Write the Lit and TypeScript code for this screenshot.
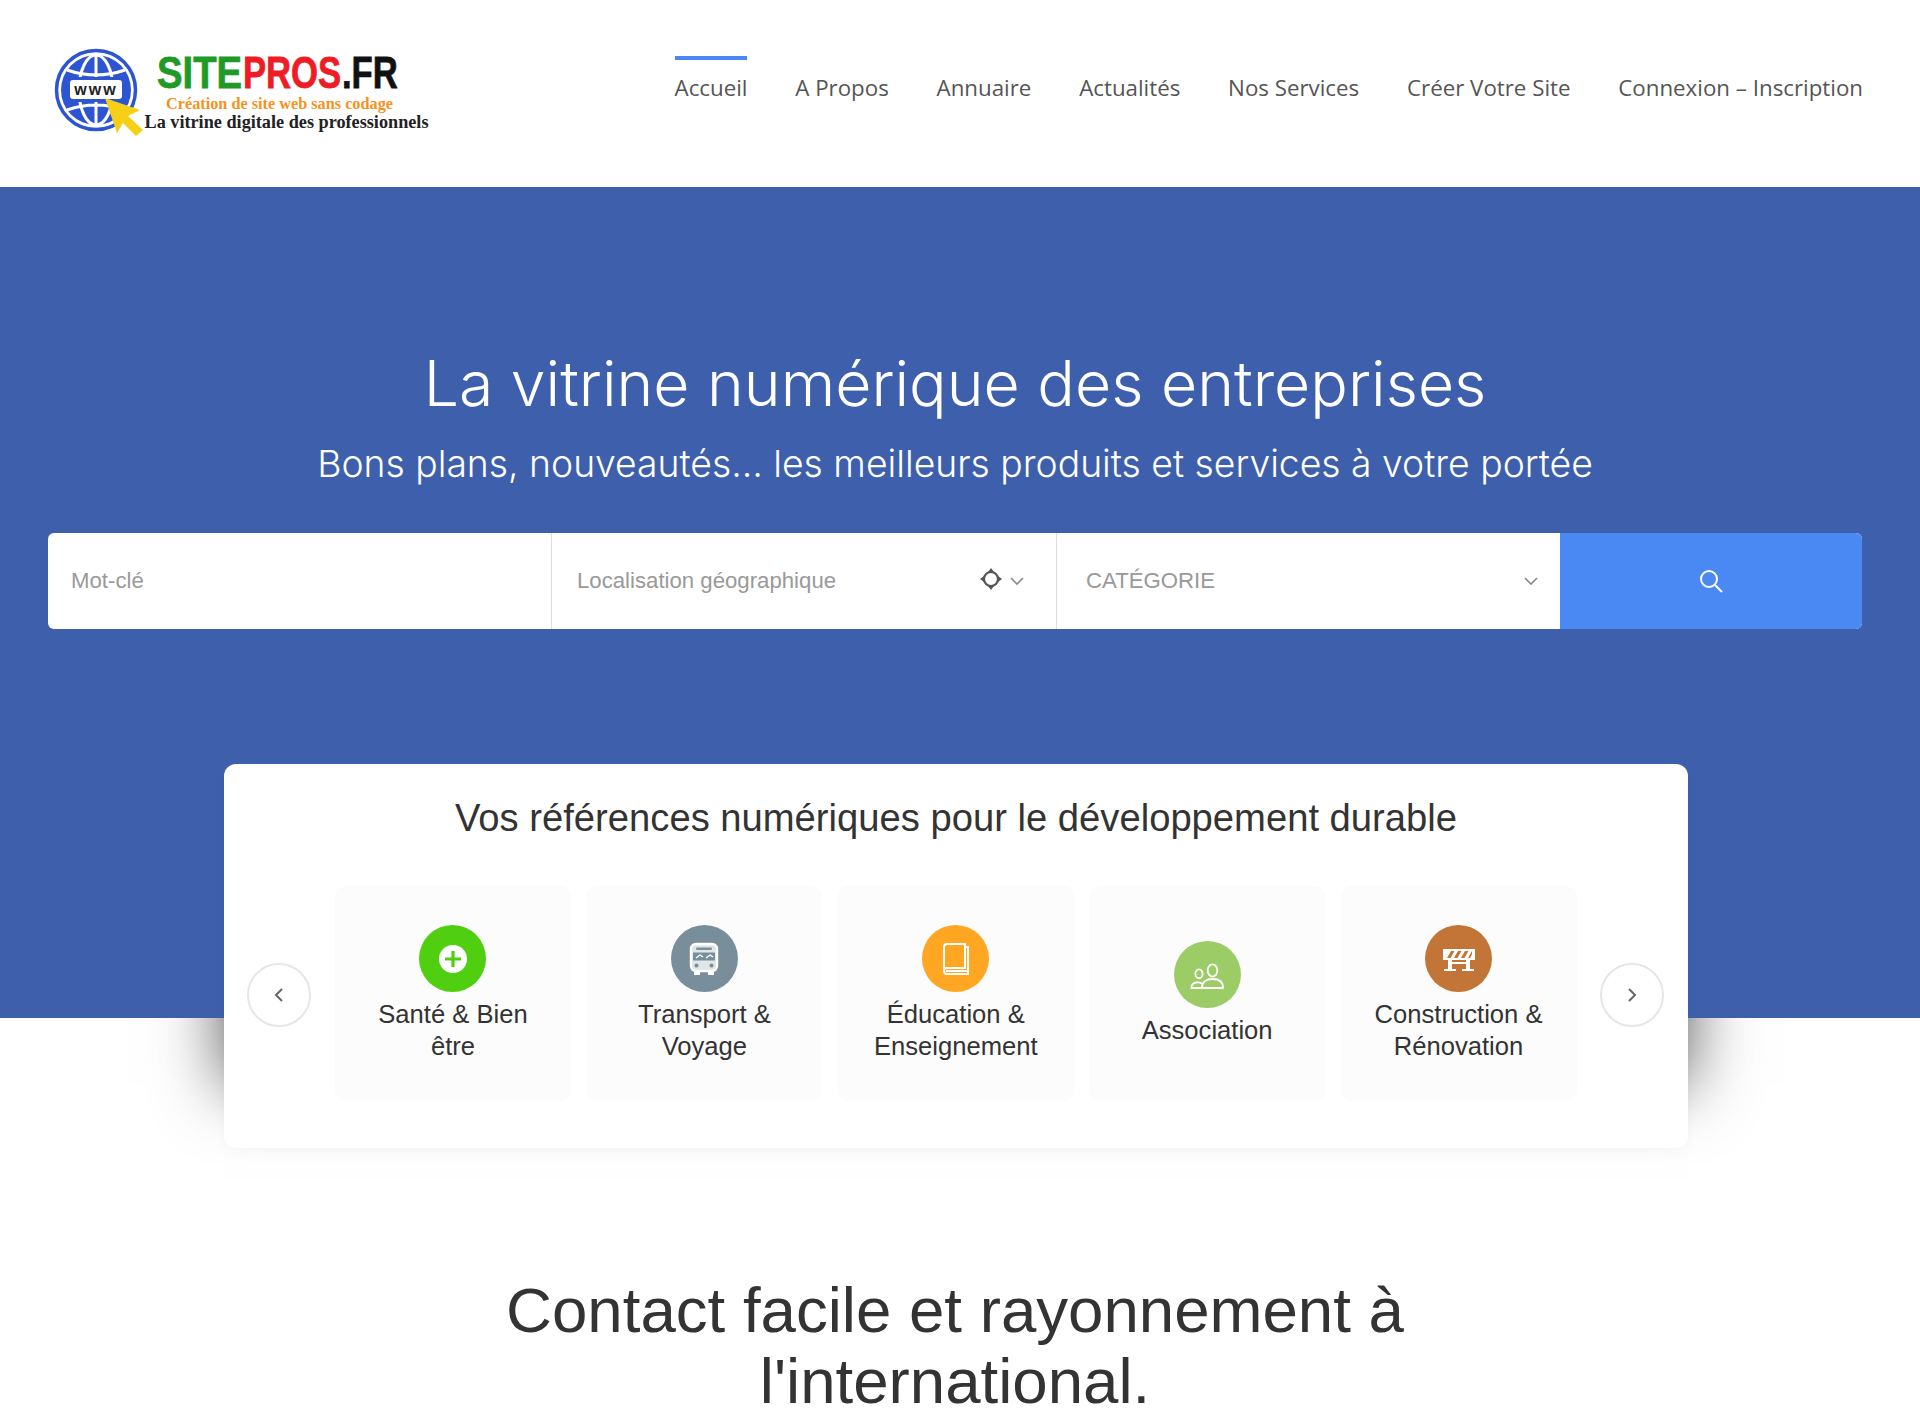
import { LitElement, html, css, svg } from "lit";
import { customElement } from "lit/decorators.js";

const NAV = ["Accueil", "A Propos", "Annuaire", "Actualités", "Nos Services", "Créer Votre Site", "Connexion – Inscription"];

const ICONS = {
  plus: svg`<circle cx="20" cy="20" r="14" fill="#fff"/><path d="M20 12v16M12 20h16" stroke="#4fcf10" stroke-width="3.200" fill="none"/>`,
  bus: svg`<rect x="7" y="5" width="26" height="27" rx="5" fill="#dfe5e8" stroke="#fff" stroke-width="2.400"/>
    <rect x="12" y="8.500" width="16" height="2.400" rx="1.200" fill="#788f9b"/>
    <path d="M9 13.500h22v8H9z" fill="#788f9b"/>
    <path d="M12 19l4-3 3 2M22 19l4-3 3 2" fill="none" stroke="#fff" stroke-width="1.400"/>
    <path d="M10 32h6v4h-6zM24 32h6v4h-6z" fill="#fff"/>
    <circle cx="12.500" cy="26.500" r="2" fill="#788f9b"/><circle cx="27.500" cy="26.500" r="2" fill="#788f9b"/>`,
  book: svg`<g fill="none" stroke="#fff" stroke-width="2"><path d="M8 32V8a3 3 0 0 1 3-3h18v24H11a3 3 0 0 0-3 3zM29 8h3v27H11a3 3 0 0 1-3-3M10 32h22"/></g>`,
  people: svg`<g fill="none" stroke="#fff" stroke-width="1.800"><ellipse cx="25.500" cy="15.500" rx="4.800" ry="6.200"/><ellipse cx="12" cy="18.700" rx="3.600" ry="4.400"/><path d="M15 33c0-6 4-9 10.500-9s10.500 3 10.500 9zM15 28.500c-1.500-1-3.500-1.500-6-1-3 .7-4.500 2.700-4.500 5.500H15"/></g>`,
  barrier: svg`<rect x="4" y="10" width="32" height="11" fill="#fff"/>
    <path d="M8 19l4-7h3.500l-4 7zM15 19l4-7h3.500l-4 7zM22 19l4-7h3.500l-4 7zM29 19l4-7v3.500L31 19z" fill="#c27537"/>
    <path d="M9 21h4v10H9zM27 21h4v10h-4zM13 23h14v2H13zM5 30h12v2H5zM23 30h12v2H23z" fill="#fff"/>`,
};

const TILES = [
  { c: "#4fcf10", i: ICONS.plus, t: ["Santé & Bien", "être"] },
  { c: "#788f9b", i: ICONS.bus, t: ["Transport &", "Voyage"] },
  { c: "#ffa722", i: ICONS.book, t: ["Éducation &", "Enseignement"] },
  { c: "#9ccc65", i: ICONS.people, t: ["Association"] },
  { c: "#c27537", i: ICONS.barrier, t: ["Construction &", "Rénovation"] },
];

@customElement("app-root")
export class AppRoot extends LitElement {
  static styles = css`
    :host { display: block; position: relative; width: 1920px; height: 1426px; overflow: hidden; background: #fff; font-family: "Liberation Sans", Arial, sans-serif; color: #333; }
    header { height: 187px; display: flex; justify-content: space-between; padding: 0 57px 0 50px; box-sizing: border-box; position: relative; z-index: 1; background: #fff; }
    .logo { display: block; margin-top: 40px; width: 385px; height: 100px; }
    .brand { font-family: "Liberation Sans", sans-serif; font-size: 45px; font-weight: 700; stroke-width: .8px; }
    .g { fill: #1f9a27; stroke: #1f9a27; }
    .r { fill: #ee1c25; stroke: #ee1c25; }
    .k { fill: #111; stroke: #111; }
    .serif { font-family: "Liberation Serif", serif; font-weight: 700; }
    .tag { font-size: 16px; fill: #f6921e; }
    .tag2 { font-size: 18px; fill: #222; }
    .www { font-family: "Liberation Sans", sans-serif; font-size: 16px; font-weight: 700; letter-spacing: 2px; fill: #222; }
    nav { display: flex; gap: 47.800px; padding-top: 56px; font-family: "Open Sans", sans-serif; font-size: 22.300px; color: #555; }
    nav a { display: block; border-top: 4px solid transparent; padding-top: 14px; line-height: 28px; white-space: nowrap; }
    nav a.on { border-top-color: #4a89f3; }
    .hero { position: relative; z-index: 1; height: 831px; background: #3e5fab; display: flex; flex-direction: column; box-sizing: border-box; padding: 150px 10px 0 0; color: #fff; align-items: center; }
    h1 { margin: 0; font-family: Inter, sans-serif; font-weight: 300; font-size: 62.500px; line-height: 92px; text-align: center; white-space: nowrap; }
    .sub { margin-top: 1px; font-family: Inter, sans-serif; font-weight: 300; font-size: 37.300px; line-height: 68px; white-space: nowrap; }
    .search { margin: 35px 0 0; align-self: flex-start; margin-left: 48px; width: 1814px; height: 96px; display: flex; background: #fff; border-radius: 6px; overflow: hidden; color: #999; font-size: 22.200px; flex: none; }
    .f { display: flex; align-items: center; box-sizing: border-box; border-right: 1px solid #ddd; }
    .f1 { flex: 0 0 504px; padding-left: 23px; }
    .f2 { flex: 0 0 505px; padding: 0 32px 0 25px; justify-content: space-between; }
    .f3 { flex: 0 0 503px; padding: 0 22px 0 29px; justify-content: space-between; border-right: 0; }
    .go { flex: 0 0 302px; background: #4a89f3; display: flex; align-items: center; justify-content: center; }
    .end { display: flex; align-items: center; gap: 7px; }
    .move { margin-top: -4px; }
    .shade { position: absolute; left: 224px; top: 800px; width: 1464px; height: 285px; box-shadow: 0 0 64px rgba(0,0,0,.67); }
    .card { position: absolute; z-index: 2; left: 224px; top: 764px; width: 1464px; height: 384px; box-sizing: border-box; padding: 0 23px; background: #fff; border-radius: 12px; box-shadow: 0 6px 12px rgba(0,0,0,.025); }
    .card h2 { margin: 0; height: 122px; box-sizing: border-box; padding-top: 29px; font-weight: 400; font-size: 38.200px; line-height: 50px; text-align: center; color: #333; white-space: nowrap; }
    .row { display: flex; align-items: center; gap: 15.400px; }
    .arrow { width: 64px; height: 64px; margin-top: 3px; border-radius: 50%; border: 2px solid #e6e6e6; box-sizing: border-box; display: flex; align-items: center; justify-content: center; background: #fff; flex: none; }
    .arrow.l { margin-right: 8.600px; }
    .arrow.r { margin-left: 7.800px; }
    .tile { width: 236px; height: 215px; flex: none; background: #fcfcfc; border-radius: 10px; display: flex; flex-direction: column; align-items: center; justify-content: center; font-size: 25.600px; line-height: 32px; text-align: center; color: #333; }
    .ic { width: 67px; height: 67px; border-radius: 50%; display: flex; align-items: center; justify-content: center; margin-bottom: 6px; }
    .bottom { margin: 0; position: absolute; z-index: 2; left: 0; right: 10px; top: 1274px; font-weight: 400; font-size: 63.600px; line-height: 71px; text-align: center; color: #333; }
    .bottom span { display: block; }
  `;
  render() {
    return html`
      <header>
        <svg class="logo" viewBox="0 0 385 100">
          <circle cx="46" cy="50" r="39.500" fill="#fff" stroke="#2d55d2" stroke-width="3.500"/>
          <circle cx="46" cy="50" r="35" fill="#2d55d2"/>
          <g fill="none" stroke="#fff" stroke-width="3">
            <ellipse cx="46" cy="50" rx="17" ry="35"/><path d="M46 15v70M17 30q29 10 58 0M17 70q29-10 58 0"/>
          </g>
          <rect x="16" y="37" width="60" height="25" rx="3" fill="#2d55d2"/>
          <rect x="20" y="40" width="52" height="19" rx="3" fill="#fff"/>
          <text class="www" x="46" y="55" text-anchor="middle">www</text>
          <path d="M55 58L90 70 78 76 93 90 86 96 73 83 67 93z" fill="#f5d017"/>
          <text class="brand g" transform="translate(107 48) scale(.85 1)">SITE</text>
          <text class="brand r" transform="translate(193 48) scale(.77 1)">PROS</text>
          <text class="brand k" transform="translate(292 48) scale(.77 1)">.FR</text>
          <text class="serif tag" x="116" y="69" textLength="227" lengthAdjust="spacingAndGlyphs">Création de site web sans codage</text>
          <text class="serif tag2" x="94.500" y="88" textLength="284" lengthAdjust="spacingAndGlyphs">La vitrine digitale des professionnels</text>
        </svg>
        <nav>${NAV.map((n, i) => html`<a class=${i === 0 ? "on" : ""}>${n}</a>`)}</nav>
      </header>
      <div class="shade"></div>
      <section class="hero">
        <h1>La vitrine numérique des entreprises</h1>
        <div class="sub">Bons plans, nouveautés… les meilleurs produits et services à votre portée</div>
        <div class="search">
          <div class="f f1">Mot-clé</div>
          <div class="f f2"><span>Localisation géographique</span>
            <span class="end">
              <svg class="move" width="24" height="24" viewBox="0 0 24 24" fill="none" stroke="#555" stroke-width="2.200"><circle cx="12" cy="12" r="7"/><path d="M12 1L9 5h6zM12 23l-3-4h6zM1 12l4-3v6zM23 12l-4-3v6z" fill="#555" stroke="none"/></svg>
              <svg width="14" height="10" viewBox="0 0 14 10" fill="none" stroke="#888" stroke-width="1.600"><path d="M1 2l6 6 6-6"/></svg>
            </span>
          </div>
          <div class="f f3"><span>CATÉGORIE</span><svg width="14" height="10" viewBox="0 0 14 10" fill="none" stroke="#888" stroke-width="1.600"><path d="M1 2l6 6 6-6"/></svg></div>
          <div class="go"><svg width="26" height="26" viewBox="0 0 26 26" fill="none" stroke="#fff" stroke-width="2"><circle cx="11" cy="11" r="8"/><path d="M17 17l7 7"/></svg></div>
        </div>
      </section>
      <div class="card">
        <h2>Vos références numériques pour le développement durable</h2>
        <div class="row">
          <div class="arrow l"><svg width="12" height="16" viewBox="0 0 12 16" fill="none" stroke="#666" stroke-width="2"><path d="M9 2L3 8l6 6"/></svg></div>
          ${TILES.map((t) => html`<div class="tile"><div class="ic" style="background:${t.c}"><svg width="40" height="40" viewBox="0 0 40 40">${t.i}</svg></div>${t.t.map((l) => html`<div>${l}</div>`)}</div>`)}
          <div class="arrow r"><svg width="12" height="16" viewBox="0 0 12 16" fill="none" stroke="#666" stroke-width="2"><path d="M3 2l6 6-6 6"/></svg></div>
        </div>
      </div>
      <h2 class="bottom"><span>Contact facile et rayonnement à</span><span>l'international.</span></h2>
    `;
  }
}
